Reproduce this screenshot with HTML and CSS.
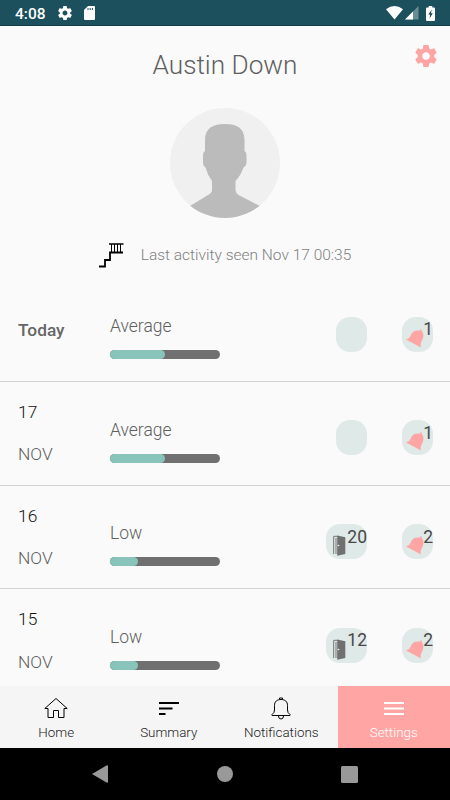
FILE: index.html
```html
<!DOCTYPE html>
<html lang="en">
<head>
<meta charset="UTF-8" />
<meta name="viewport" content="width=device-width, initial-scale=1" />
<title>Austin Down</title>
<link rel="stylesheet" href="styles.css">
</head>
<body>
  <!-- shared icons -->
  <svg class="sprite" width="0" height="0">
    <symbol id="gear" viewBox="2 2 20 20">
      <path d="M19.43 12.98c.04-.32.07-.64.07-.98s-.03-.66-.07-.98l2.11-1.65c.19-.15.24-.42.12-.64l-2-3.46c-.12-.22-.39-.3-.61-.22l-2.49 1c-.52-.4-1.08-.73-1.69-.98l-.38-2.65C14.46 2.18 14.25 2 14 2h-4c-.25 0-.46.18-.49.42l-.38 2.65c-.61.25-1.17.59-1.69.98l-2.49-1c-.23-.09-.49 0-.61.22l-2 3.46c-.13.22-.07.49.12.64l2.11 1.65c-.04.32-.07.65-.07.98s.03.66.07.98l-2.11 1.65c-.19.15-.24.42-.12.64l2 3.46c.12.22.39.3.61.22l2.49-1c.52.4 1.08.73 1.69.98l.38 2.65c.03.24.24.42.49.42h4c.25 0 .46-.18.49-.42l.38-2.65c.61-.25 1.17-.59 1.69-.98l2.49 1c.23.09.49 0 .61-.22l2-3.46c.12-.22.07-.49-.12-.64l-2.11-1.65zM12 15.5c-1.93 0-3.500-1.570-3.500-3.500s1.570-3.500 3.500-3.500 3.500 1.570 3.500 3.500-1.570 3.500-3.500 3.500z"/>
    </symbol>
    <symbol id="alert" viewBox="0 0 18 19">
      <path d="M14.300.4H15.500L15.900 2.300C17.800 4.500 18 8 16.300 11C15 13.300 14.500 15 14.700 18.600L9.500 15.600 0 10.600C3.500 9 4.200 8 5 5.800C6.500 2.300 9.500 1 13.600 1.700Z"/>
    </symbol>
    <symbol id="door" viewBox="0 0 13 21">
      <path d="M.7 19V1.300H5M3 19V3" fill="none" stroke="#777" stroke-width="1"/>
      <path d="M4.200.4 12.300 2.300V19L4.200 20.700Z"/>
      <circle cx="5.500" cy="10.500" r=".8" fill="#fff"/>
    </symbol>
  </svg>

  <div class="status-bar">
    <span class="time">4:08</span>
    <svg class="status-gear" width="14" height="14"><use href="#gear"/></svg>
    <svg width="11" height="14" viewBox="0 0 11 14"><path d="M4 0H10Q11 0 11 1V13Q11 14 10 14H1Q0 14 0 13V4Z"/><path d="M4 2V4M6.200 2V4M8.400 2V4" stroke="#1b505c" stroke-width="1"/></svg>
    <div class="signals">
      <svg width="17" height="14" viewBox="0 0 17 14"><path d="M0 3.200Q8.500-3 17 3.200L8.500 13.500Z"/></svg>
      <svg width="14" height="14" viewBox="0 0 14 14"><path d="M0 13.500 13.500 0V13.500Z" opacity=".35"/><path d="M0 13.500 8 5.500V13.500Z"/></svg>
      <svg class="battery" width="9" height="15" viewBox="0 0 9 15"><path d="M2.700 0H6.300V1.500H8Q9 1.500 9 2.500V14Q9 15 8 15H1Q0 15 0 14V2.500Q0 1.500 1 1.500H2.700Z"/><path d="M5.800 3.500 2.300 8.500H4.300L3.500 12.500 6.800 7.300H4.900Z" fill="#16414c"/></svg>
    </div>
  </div>

  <header class="profile">
    <svg class="profile-settings" width="22" height="22"><use href="#gear"/></svg>
    <h1>Austin Down</h1>
    <svg class="avatar" width="110" height="110" viewBox="0 0 110 110">
      <clipPath id="round"><circle cx="55" cy="55" r="55"/></clipPath>
      <circle cx="55" cy="55" r="55" fill="#f0f0f0"/>
      <path clip-path="url(#round)" fill="#bbb" d="M55 16C67 16 74.500 20 74.500 32V43Q76.500 44 76.500 47V54Q76.500 58 73.500 59.500Q71 67 65.500 73V82Q65.500 85 68.500 87L90 98V110H20V98L38 87Q42 85 42 82V73Q37.500 67 35.500 59.500Q33 58 33 54V47Q33 44 35 43V32C35 20 43 16 55 16Z"/>
    </svg>
    <div class="last-seen">
      <svg width="25" height="25" viewBox="0 0 25 25" fill="none" stroke="#000">
        <path d="M0 23.500H6V17H11V9.500H24" stroke-width="1.800"/>
        <path d="M10 1H24.500" stroke-width="1.500"/>
        <path d="M12.500 1V9M15.500 1V9M18.500 1V9M21.500 1V9" stroke-width="1"/>
      </svg>
      <span>Last activity seen Nov 17 00:35</span>
    </div>
  </header>

  <main class="days">
    <section class="day">
      <div class="date today">Today</div>
      <div class="activity">
        <p>Average</p>
        <div class="bar"><div class="fill" style="width: 50.5%"></div></div>
      </div>
      <div class="badge"></div>
      <div class="badge bell"><svg width="18" height="19"><use href="#alert"/></svg><span>1</span></div>
    </section>

    <section class="day">
      <div class="date"><b>17</b><span>NOV</span></div>
      <div class="activity">
        <p>Average</p>
        <div class="bar"><div class="fill" style="width: 50.5%"></div></div>
      </div>
      <div class="badge"></div>
      <div class="badge bell"><svg width="18" height="19"><use href="#alert"/></svg><span>1</span></div>
    </section>

    <section class="day">
      <div class="date"><b>16</b><span>NOV</span></div>
      <div class="activity">
        <p>Low</p>
        <div class="bar"><div class="fill" style="width: 25.5%"></div></div>
      </div>
      <div class="badge doors"><svg width="13" height="21"><use href="#door"/></svg><span>20</span></div>
      <div class="badge bell"><svg width="18" height="19"><use href="#alert"/></svg><span>2</span></div>
    </section>

    <section class="day">
      <div class="date"><b>15</b><span>NOV</span></div>
      <div class="activity">
        <p>Low</p>
        <div class="bar"><div class="fill" style="width: 25.5%"></div></div>
      </div>
      <div class="badge doors"><svg width="13" height="21"><use href="#door"/></svg><span>12</span></div>
      <div class="badge bell"><svg width="18" height="19"><use href="#alert"/></svg><span>2</span></div>
    </section>
  </main>

  <nav class="tabs">
    <a class="tab">
      <svg width="24" height="24" viewBox="0 0 24 24"><path d="M12 2.500 .800 12.500H4V21.500H9.500V14.500H14.500V21.500H20V12.500H23.200Z"/></svg>
      Home
    </a>
    <a class="tab">
      <svg width="24" height="24" viewBox="0 0 24 24"><path d="M2 7H22M2 12.500H15.500M2 18H8.500" stroke-width="2"/></svg>
      Summary
    </a>
    <a class="tab">
      <svg width="24" height="24" viewBox="0 0 24 24"><path d="M3 19.500V18.500Q5.500 17 5.500 14V9.500C5.500 5.500 8 3.500 12 3.500S18.500 5.500 18.500 9.500V14Q18.500 17 21 18.500V19.500ZM10.500 3.500V2H13.500V3.500M9.500 20Q9.500 23 12 23T14.500 20"/></svg>
      Notifications
    </a>
    <a class="tab active">
      <svg width="24" height="24" viewBox="0 0 24 24"><path d="M2 7H22M2 12.500H22M2 18H22" stroke-width="2.200"/></svg>
      Settings
    </a>
  </nav>

  <div class="system-nav">
    <svg width="16" height="18" viewBox="0 0 16 18"><path d="M0 9 14.500.4Q16 0 16 1V17Q16 18 14.500 17.600Z"/></svg>
    <svg width="16" height="16" viewBox="0 0 16 16"><circle cx="8" cy="8" r="8"/></svg>
    <svg width="17" height="17" viewBox="0 0 17 17"><rect width="17" height="17" rx="1.500"/></svg>
  </div>
</body>
</html>
```

FILE: styles.css
```css
:root {
  --teal: #1b505c;
  --mint: #88c4ba;
  --pink: #ffa6a5;
  --grey: #707070;
  --badge: #dfe9e7;
}
* {
  box-sizing: border-box;
}
body {
  margin: 0;
  height: 800px;
  display: flex;
  flex-direction: column;
  overflow: hidden;
  background: #fafafa;
  color: #606060;
  font-family: Roboto, sans-serif;
  font-weight: 300;
}
svg {
  display: block;
  flex: none;
}
.sprite {
  position: absolute;
}
.status-bar {
  height: 26px;
  flex: none;
  display: flex;
  align-items: center;
  padding: 1px 15px 0 15px;
  background: var(--teal);
  border-bottom: 1px solid #113d48;
  color: #fff;
  fill: #fff;
}
.time {
  padding-top: 1px;
  font-size: 15.5px;
  font-weight: 500;
  width: 43px;
}
.status-gear {
  margin-right: 12px;
}
.signals {
  display: flex;
  margin-left: auto;
  gap: 2px;
}
.battery {
  margin-left: 5px;
}
.profile {
  height: 252px;
  flex: none;
  position: relative;
  display: flex;
  flex-direction: column;
  align-items: center;
  padding-top: 23px;
}
.profile-settings {
  position: absolute;
  top: 19px;
  right: 13px;
  fill: var(--pink);
}
h1 {
  margin: 0 0 26.5px;
  font-size: 26.2px;
  font-weight: 300;
  line-height: 32px;
}
.avatar {
  margin-bottom: 25px;
}
.last-seen {
  display: flex;
  align-items: center;
  gap: 17px;
  font-size: 15.5px;
  line-height: 25px;
  color: #808080;
}
.days {
  flex: 1;
  min-height: 0;
  overflow: hidden;
}
.day {
  height: 103.8px;
  display: grid;
  grid-template-columns: 92px 109.5px 147.5px 66px;
  align-items: start;
  padding: 0 17px 0 18px;
  border-bottom: 1px solid #d3d3d3;
}
.date {
  display: flex;
  flex-direction: column;
  gap: 17.5px;
  padding-top: 18px;
  font-size: 17.4px;
  line-height: 25px;
}
.date b {
  font-weight: 300;
  color: #111;
}
.today {
  padding-top: 40px;
  font-size: 17.3px;
  font-weight: 500;
  color: #666;
}
.activity {
  padding-top: 35.8px;
}
.activity p {
  margin: 0 0 11px;
  font-size: 17.5px;
  line-height: 25px;
}
.bar {
  height: 9px;
  border-radius: 5px;
  background: var(--grey);
  overflow: hidden;
}
.fill {
  height: 100%;
  border-radius: 5px;
  background: var(--mint);
}
.badge {
  justify-self: end;
  width: 31px;
  height: 35px;
  margin-top: 38.5px;
  display: flex;
  align-items: flex-start;
  justify-content: flex-end;
  border-radius: 14px;
  background: var(--badge);
}
.badge span {
  margin-top: 2.5px;
  font-size: 17.5px;
  font-weight: 400;
  line-height: 20px;
  color: #484848;
}
.bell svg {
  margin: 12px 0 0;
  fill: var(--pink);
}
.bell span {
  margin-left: -1px;
}
.doors {
  width: 41px;
}
.doors svg {
  margin: 11px 1px 0 0;
  fill: var(--grey);
}
.tabs {
  height: 62px;
  flex: none;
  display: grid;
  grid-template-columns: repeat(4, 1fr);
  background: #f5f5f5;
}
.tab {
  display: flex;
  flex-direction: column;
  align-items: center;
  gap: 5px;
  padding-top: 10px;
  font-size: 13.4px;
  line-height: 16px;
  color: #222;
  fill: none;
  stroke: #000;
}
.tab.active {
  background: var(--pink);
  color: #fff;
  stroke: #fff;
}
.system-nav {
  height: 52px;
  flex: none;
  display: grid;
  grid-template-columns: repeat(3, 124.5px);
  justify-content: center;
  justify-items: center;
  align-items: center;
  padding-right: 1px;
  background: #000;
  fill: #999;
}
```
